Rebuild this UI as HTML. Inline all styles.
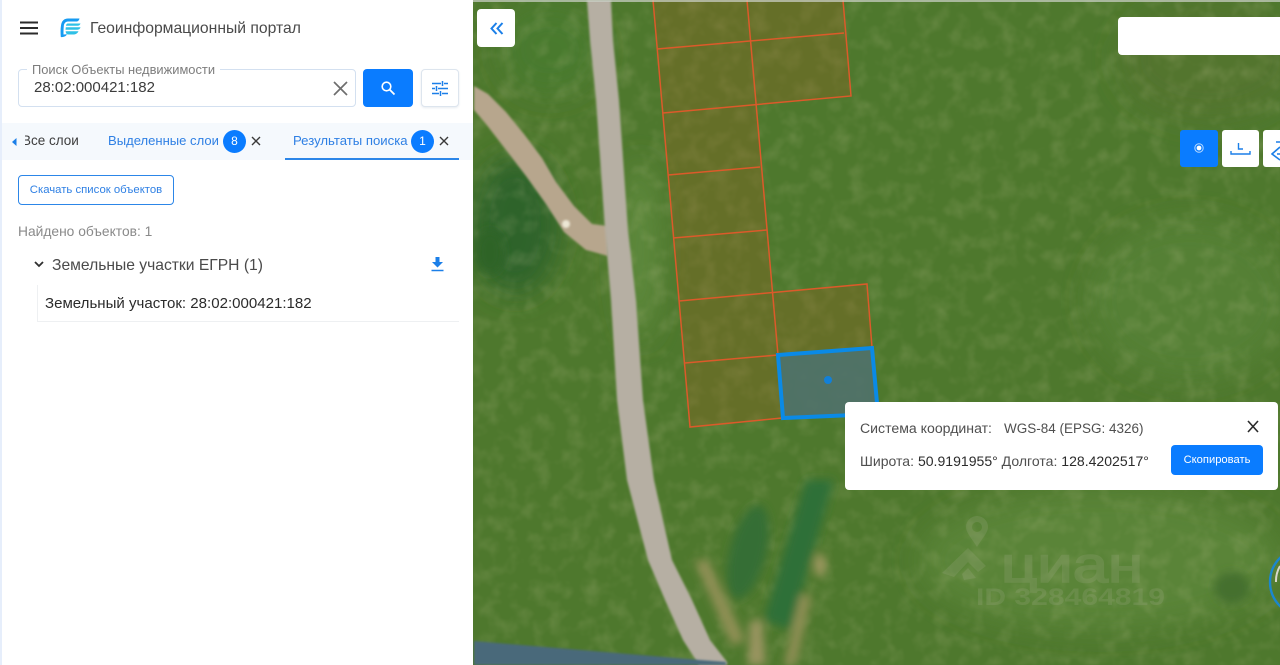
<!DOCTYPE html>
<html lang="ru"><head><meta charset="utf-8"><title>Геоинформационный портал</title>
<style>
html,body{margin:0;padding:0;width:1280px;height:665px;overflow:hidden;background:#fff;font-family:"Liberation Sans","Noto Sans CJK SC",sans-serif}
#wrap{position:absolute;left:0;top:0;width:1280px;height:665px;overflow:hidden;filter:blur(.35px)}
#map{position:absolute;left:473px;top:0;width:807px;height:665px}
.a{position:absolute;white-space:nowrap}
#panel{position:absolute;left:0;top:0;width:473px;height:665px;background:#fff;border-left:2px solid #e6eefb;box-sizing:border-box}
</style></head><body><div id="wrap">
<svg id="map" viewBox="473 0 807 665" width="807" height="665" xmlns="http://www.w3.org/2000/svg">
<defs>
<filter id="b1" x="-20%" y="-20%" width="140%" height="140%"><feGaussianBlur stdDeviation="1"/></filter>
<filter id="b12" x="-40%" y="-40%" width="180%" height="180%"><feGaussianBlur stdDeviation="14"/></filter>
<filter id="b4" x="-30%" y="-30%" width="160%" height="160%"><feGaussianBlur stdDeviation="4.5"/></filter>
<filter id="n" x="0" y="0" width="100%" height="100%"><feTurbulence type="fractalNoise" baseFrequency="0.06" numOctaves="3" seed="7"/><feColorMatrix values="0 0 0 0 .62  0 0 0 0 .6  0 0 0 0 .34  0 0 0 1.4 -.62"/><feGaussianBlur stdDeviation="1"/></filter>
</defs>
<rect x="473" y="0" width="807" height="665" fill="#4e782d"/>
<g filter="url(#b12)">
<ellipse cx="515" cy="225" rx="45" ry="70" fill="#2f6429"/>
<ellipse cx="550" cy="50" rx="50" ry="45" fill="#4a7a2f"/>
<ellipse cx="1100" cy="560" rx="180" ry="70" fill="#5a8438"/>
<ellipse cx="1210" cy="60" rx="90" ry="60" fill="#52752f"/>
<ellipse cx="1190" cy="300" rx="100" ry="80" fill="#558036"/>
<ellipse cx="640" cy="250" rx="18" ry="90" fill="#5f8a3e"/>
</g>
<rect x="473" y="0" width="807" height="665" filter="url(#n)" opacity=".28"/>
<ellipse cx="490" cy="252" rx="14" ry="22" fill="#2f6427" filter="url(#b4)"/>
<g filter="url(#b4)">
<ellipse cx="748" cy="552" rx="18" ry="48" transform="rotate(14 748 552)" fill="#366e34"/>
<path d="M834 480L806 480 764 620 790 630Z" fill="#2f7038"/>
<path d="M694 560L708 560 745 640 732 646Z" fill="#8f8f54"/>
<path d="M750 620L762 620 766 665 748 665Z" fill="#9a9460"/>
<path d="M800 595L812 595 796 665 784 665Z" fill="#8f8f54"/>
<ellipse cx="820" cy="565" rx="6" ry="12" fill="#9f9860"/>
<ellipse cx="1232" cy="588" rx="18" ry="16" fill="#44702e"/>
</g>
<path d="M474 86L488 94 506 112 524 134 542 158 556 182 574 206 592 224 608 226 608 256 586 250 564 232 546 204 526 176 506 150 486 124 474 110Z" fill="#b7a68d" filter="url(#b1)"/>
<ellipse cx="566" cy="224" rx="4" ry="4" fill="#ece6d4" filter="url(#b1)"/>
<path d="M587 0H611L613 40 619 100 628 230 636 300 643 400 654 480 672 560 692 600 710 640 727 662V665H699L683 640 665 600 648 560 627 480 617 400 611 300 605 230 596 100 590 40Z" fill="#b6afa3" filter="url(#b1)"/>
<polygon points="474,641 700,660 726,662 726,665 474,665" fill="#49697a" filter="url(#b1)"/>
<polygon points="653,0 843,0 851,96 756,105 772.5,293 867,284 872,347 778,355 782,418 690,427" fill="#8f6220" fill-opacity=".36"/>
<g stroke="#dc5a2a" stroke-width="1.5" fill="none">
<path d="M653 0L690 427 782 418"/>
<path d="M747 0L778 355"/>
<path d="M843 0L851 96 663 113"/>
<path d="M657 49L844 33"/>
<path d="M668 175L760 167"/>
<path d="M673 238L767 230"/>
<path d="M679 301L867 284 872 347"/>
<path d="M685 363L778 355"/>
</g>
<polygon points="778,355 872,348 878,414 783,418" fill="#50716c" fill-opacity=".9"/>
<polygon points="778,355 872,348 878,414 783,418" fill="none" stroke="#0a8ae6" stroke-width="4"/>
<circle cx="828" cy="380" r="4" fill="#1280d8"/>
<g opacity=".2" fill="#a8b090" stroke="#a8b090">
<path stroke="none" fill-rule="evenodd" d="M977 516a11 11 0 0 1 11 11c0 6-7 13-11 20-4-7-11-14-11-20a11 11 0 0 1 11-11zm0 6a5 5 0 1 0 0 10 5 5 0 0 0 0-10z"/>
<path stroke="none" d="M942 573L968 548 986 566 978 572 968 562 954 577Z"/>
<path stroke="none" d="M962 574L968 568 976 578 964 580Z"/>
<text x="1001" y="582" font-family="Liberation Sans,sans-serif" font-size="50" stroke-width="1.6" textLength="142" lengthAdjust="spacingAndGlyphs">циан</text>
<text x="976" y="605" stroke="none" font-family="Liberation Sans,sans-serif" font-size="24" font-weight="700" textLength="189" lengthAdjust="spacingAndGlyphs">ID 328464819</text>
</g>
<circle cx="1304" cy="582" r="34" fill="none" stroke="#1b87cf" stroke-width="2.4"/>
<path d="M1276 582a30 30 0 0 1 4-16" stroke="#d8d8cc" stroke-width="2" fill="none"/>
<rect x="473" y="0" width="807" height="2" fill="#cfd3cc" opacity=".7"/>
</svg>

<div id="panel"></div>
<!-- header -->
<svg class="a" style="left:20px;top:21px" width="18" height="14" viewBox="0 0 18 14"><path d="M0 1.5H18M0 7H18M0 12.5H18" stroke="#2b2b2b" stroke-width="2"/></svg>
<svg class="a" style="left:60px;top:18px" width="21" height="20" viewBox="0 0 21 20"><path d="M8 .5H19.5C19 2.5 18 3.5 16 3.5H8C5.5 3.5 4 5.5 3.8 8 3.5 11 3.5 14 3.5 16.5L7 16.3C6 18.5 3 19.5.8 19 .5 15 .4 11 1 7.5 1.6 3 4 .5 8 .5Z" fill="#169bf2"/><path d="M7.5 5.5H20.5C20 7 19 7.8 17.5 7.8H6C6 6.8 6.6 5.8 7.5 5.5ZM5.8 9.3H20.5C20 11 19 11.7 17.5 11.7H5.5ZM5.6 13.2H18.5C17.5 15.5 15.5 16.5 13 16.5H8.5C7 16.5 5.8 15.5 5.6 13.2Z" fill="#2fc0e6"/></svg>
<div class="a" style="left:90px;top:20px;font-size:15.7px;line-height:18px;color:#4a4a4a">Геоинформационный портал</div>
<!-- search -->
<div class="a" style="left:18px;top:69px;width:338px;height:38px;box-sizing:border-box;border:1px solid #d3e0f0;border-radius:4px;background:#fff"></div>
<div class="a" style="left:27px;top:63px;padding:0 5px;background:#fff;font-size:12.9px;line-height:14px;color:#7d7d7d">Поиск Объекты недвижимости</div>
<div class="a" style="left:34px;top:79px;font-size:15px;line-height:18px;color:#3c3c3c">28:02:000421:182</div>
<svg class="a" style="left:333px;top:81px" width="15" height="15" viewBox="0 0 15 15"><path d="M1 1L14 14M14 1L1 14" stroke="#6e6e6e" stroke-width="1.7"/></svg>
<div class="a" style="left:363px;top:69px;width:50px;height:38px;background:#0a7cff;border-radius:4px"></div>
<svg class="a" style="left:380px;top:80px" width="16" height="16" viewBox="0 0 16 16"><circle cx="6.5" cy="6.5" r="4.3" fill="none" stroke="#fff" stroke-width="1.6"/><path d="M9.8 9.8L14.5 14.5" stroke="#fff" stroke-width="1.8"/></svg>
<div class="a" style="left:421px;top:69px;width:38px;height:38px;box-sizing:border-box;border:1px solid #dde5ee;border-radius:4px;background:#fff;box-shadow:0 1px 2px rgba(60,90,130,.12)"></div>
<svg class="a" style="left:432px;top:81px" width="16" height="15" viewBox="0 0 16 15"><path d="M0 2.5H9M12 2.5H16M0 7.5H3M6 7.5H16M0 12.5H7M10 12.5H16M10.5 0V5M4.5 5V10M8.5 10V15" stroke="#1b7fe8" stroke-width="1.5" fill="none"/></svg>
<!-- tabs -->
<div class="a" style="left:2px;top:123px;width:471px;height:37px;background:#f5f9fd"></div>
<svg class="a" style="left:12px;top:138px" width="5" height="8" viewBox="0 0 5 8"><path d="M4.5 0V8L0 4Z" fill="#1b7fe8"/></svg>
<div class="a" style="left:25px;top:133px;width:54px;overflow:hidden;font-size:13.5px;line-height:16px;color:#3d3d3d"><span style="margin-left:-3px">Все слои</span></div>
<div class="a" style="left:108px;top:133px;font-size:13.05px;line-height:16px;color:#2f80e4">Выделенные слои</div>
<div class="a" style="left:223px;top:130px;width:23px;height:23px;border-radius:50%;background:#0a7cff;color:#fff;font-size:12px;line-height:23px;text-align:center">8</div>
<svg class="a" style="left:251px;top:136px" width="10" height="10" viewBox="0 0 10 10"><path d="M1 1L9 9M9 1L1 9" stroke="#3a3a3a" stroke-width="1.4"/></svg>
<div class="a" style="left:293px;top:133px;font-size:13.15px;line-height:16px;color:#2f80e4">Результаты поиска</div>
<div class="a" style="left:411px;top:130px;width:23px;height:23px;border-radius:50%;background:#0a7cff;color:#fff;font-size:12px;line-height:23px;text-align:center">1</div>
<svg class="a" style="left:439px;top:136px" width="10" height="10" viewBox="0 0 10 10"><path d="M1 1L9 9M9 1L1 9" stroke="#3a3a3a" stroke-width="1.4"/></svg>
<div class="a" style="left:285px;top:158px;width:174px;height:2px;background:#2c86e8"></div>
<!-- results -->
<div class="a" style="left:18px;top:175px;width:156px;height:30px;box-sizing:border-box;border:1px solid #2c86e8;border-radius:4px;background:#fff;color:#2f80e4;font-size:11.35px;line-height:28px;text-align:center">Скачать список объектов</div>
<div class="a" style="left:18px;top:224px;font-size:13.8px;line-height:16px;color:#8a8a8a">Найдено объектов: 1</div>
<svg class="a" style="left:34px;top:261px" width="10" height="7" viewBox="0 0 10 7"><path d="M1 1L5 5 9 1" fill="none" stroke="#2f2f2f" stroke-width="1.8"/></svg>
<div class="a" style="left:52px;top:257px;font-size:15.65px;line-height:18px;color:#4a4a4a">Земельные участки ЕГРН (1)</div>
<svg class="a" style="left:431px;top:257px" width="13" height="15" viewBox="0 0 13 15"><path d="M4.5 0H8.5V5H12L6.5 10.5 1 5H4.5Z" fill="#1b7fe8"/><path d="M.5 13.5H12.5" stroke="#1b7fe8" stroke-width="1.5"/></svg>
<div class="a" style="left:37px;top:285px;width:422px;height:37px;box-sizing:border-box;border-left:1px solid #eef0f2;border-bottom:1px solid #eef0f2"></div>
<div class="a" style="left:45px;top:295px;font-size:15.05px;line-height:18px;color:#2b2b2b">Земельный участок: 28:02:000421:182</div>
<!-- map controls -->
<div class="a" style="left:477px;top:9px;width:38px;height:38px;background:#fff;border-radius:4px"></div>
<svg class="a" style="left:490px;top:22px" width="14" height="13" viewBox="0 0 14 13"><path d="M6.5 1L1.5 6.5 6.5 12M12.5 1L7.5 6.5 12.5 12" fill="none" stroke="#1b7fe8" stroke-width="2"/></svg>
<div class="a" style="left:1118px;top:17px;width:162px;height:38px;background:#fff;border-radius:4px 0 0 4px"></div>
<div class="a" style="left:1180px;top:130px;width:38px;height:37px;background:#0a7cff;border-radius:3px"></div>
<svg class="a" style="left:1194px;top:143px" width="10" height="10" viewBox="0 0 10 10"><circle cx="5" cy="5" r="2.4" fill="#fff"/><circle cx="5" cy="5" r="4.2" fill="none" stroke="#fff" stroke-width="1" opacity=".7"/></svg>
<div class="a" style="left:1222px;top:130px;width:37px;height:37px;background:#fff;border-radius:3px"></div>
<svg class="a" style="left:1230px;top:142px" width="21" height="14" viewBox="0 0 21 14"><path d="M1 9V12H20V9" fill="none" stroke="#1b7fe8" stroke-width="1.4"/><path d="M8.5 1V7H13" fill="none" stroke="#1b7fe8" stroke-width="1.4"/></svg>
<div class="a" style="left:1263px;top:130px;width:17px;height:37px;background:#fff;border-radius:3px 0 0 3px"></div>
<svg class="a" style="left:1271px;top:138px" width="9" height="24" viewBox="0 0 9 24"><path d="M9 9L1 16 9 22" fill="none" stroke="#1b7fe8" stroke-width="1.6"/><path d="M5 4H9M6 16H9" stroke="#1b7fe8" stroke-width="1.6"/></svg>
<!-- popup -->
<div class="a" style="left:845px;top:402px;width:433px;height:88px;background:#fff;border-radius:4px"></div>
<div class="a" style="left:860px;top:420px;font-size:14.1px;line-height:17px;color:#4f4f4f">Система координат:</div>
<div class="a" style="left:1004px;top:420px;font-size:13.5px;line-height:17px;color:#4f4f4f">WGS-84 (EPSG: 4326)</div>
<svg class="a" style="left:1247px;top:420px" width="12" height="13" viewBox="0 0 12 13"><path d="M1 1L11 12M11 1L1 12" stroke="#2b2b2b" stroke-width="1.6"/></svg>
<div class="a" style="left:860px;top:453px;font-size:14.05px;line-height:17px;color:#4f4f4f">Широта: <span style="color:#2b2b2b">50.9191955°</span> Долгота: <span style="color:#2b2b2b">128.4202517°</span></div>
<div class="a" style="left:1171px;top:445px;width:92px;height:30px;background:#0a7cff;border-radius:4px;color:#fff;font-size:11.2px;line-height:30px;text-align:center">Скопировать</div>
</div></body></html>
